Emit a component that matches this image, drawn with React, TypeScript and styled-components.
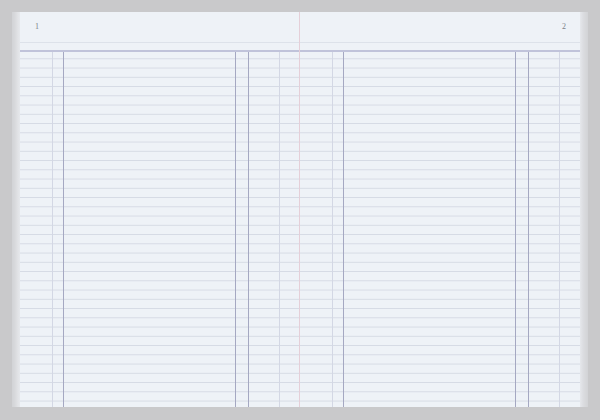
import styled, { createGlobalStyle } from "styled-components";

const GlobalStyle = createGlobalStyle`
  html, body {
    margin: 0;
    padding: 0;
    background: #c9c9cb;
  }
  #root {
    width: 600px;
    height: 420px;
  }
`;

// column layout of one page, in px from the page's left edge
const columns = [
  { width: 33, line: "light" },
  { width: 11, line: "dark" },
  { width: 172, line: "dark" },
  { width: 13, line: "dark" },
  { width: 31, line: "light" },
  { width: 20, line: "none" },
] as const;

type Line = "light" | "dark" | "none";

const lineColor: Record<Line, string> = {
  light: "#d3d7e4",
  dark: "#a5a8c2",
  none: "transparent",
};

export default function App() {
  return (
    <>
      <GlobalStyle />
      <Frame>
        <Book>
          <PageEdges />
          <Spread>
            <Page $fold>
              <Header>
                <PageNumber>1</PageNumber>
              </Header>
              <Ruled>
                {columns.map((c, i) => (
                  <Column key={i} $width={c.width} $line={c.line} />
                ))}
              </Ruled>
            </Page>
            <Page>
              <Header $right>
                <PageNumber>2</PageNumber>
              </Header>
              <Ruled>
                {columns.map((c, i) => (
                  <Column key={i} $width={c.width} $line={c.line} />
                ))}
              </Ruled>
            </Page>
          </Spread>
          <PageEdges $right />
        </Book>
      </Frame>
    </>
  );
}

const Frame = styled.div`
  width: 600px;
  height: 420px;
  box-sizing: border-box;
  padding: 12px 12px 13px 12px;
  background: #c9c9cb;
`;

const Book = styled.div`
  display: flex;
  height: 100%;
`;

const PageEdges = styled.div<{ $right?: boolean }>`
  width: 8px;
  background: ${(p) =>
    p.$right
      ? "linear-gradient(90deg, #e6e8ec 0px, #dcdde1 3px, #d8d9dc 5px, #d2d3d6 8px)"
      : "linear-gradient(90deg, #d2d3d6 0px, #d8d9dc 3px, #dfe0e3 5px, #e6e8ec 8px)"};
`;

const Spread = styled.div`
  display: flex;
  width: 560px;
  background: #eef2f7;
`;

const Page = styled.div<{ $fold?: boolean }>`
  width: 280px;
  box-sizing: border-box;
  display: flex;
  flex-direction: column;
  border-right: ${(p) => (p.$fold ? "1px solid #e5cfd8" : "none")};
`;

const Header = styled.div<{ $right?: boolean }>`
  height: 40px;
  box-sizing: border-box;
  display: flex;
  flex-direction: column;
  align-items: ${(p) => (p.$right ? "flex-end" : "flex-start")};
  padding: 10px ${(p) => (p.$right ? "14px" : "0")} 0
    ${(p) => (p.$right ? "0" : "15px")};
  background: linear-gradient(
    180deg,
    transparent 0px,
    transparent 30px,
    #dde2ea 30px,
    #dde2ea 31px,
    transparent 31px
  );
  border-bottom: 2px solid #c0c3da;
`;

const PageNumber = styled.span`
  font-family: "Liberation Serif", "DejaVu Serif", serif;
  font-size: 8px;
  line-height: 10px;
  color: #7c7f88;
`;

const Ruled = styled.div`
  flex: 1;
  display: flex;
  background-image: linear-gradient(
    180deg,
    transparent 0px,
    transparent calc(100% - 1px),
    #d5dae4 calc(100% - 1px)
  );
  background-size: 100% 9.26px;
  background-position: 0 -2px;
`;

const Column = styled.div<{ $width: number; $line: Line }>`
  width: ${(p) => p.$width}px;
  flex: none;
  box-sizing: border-box;
  border-right: 1px solid ${(p) => lineColor[p.$line]};
`;
